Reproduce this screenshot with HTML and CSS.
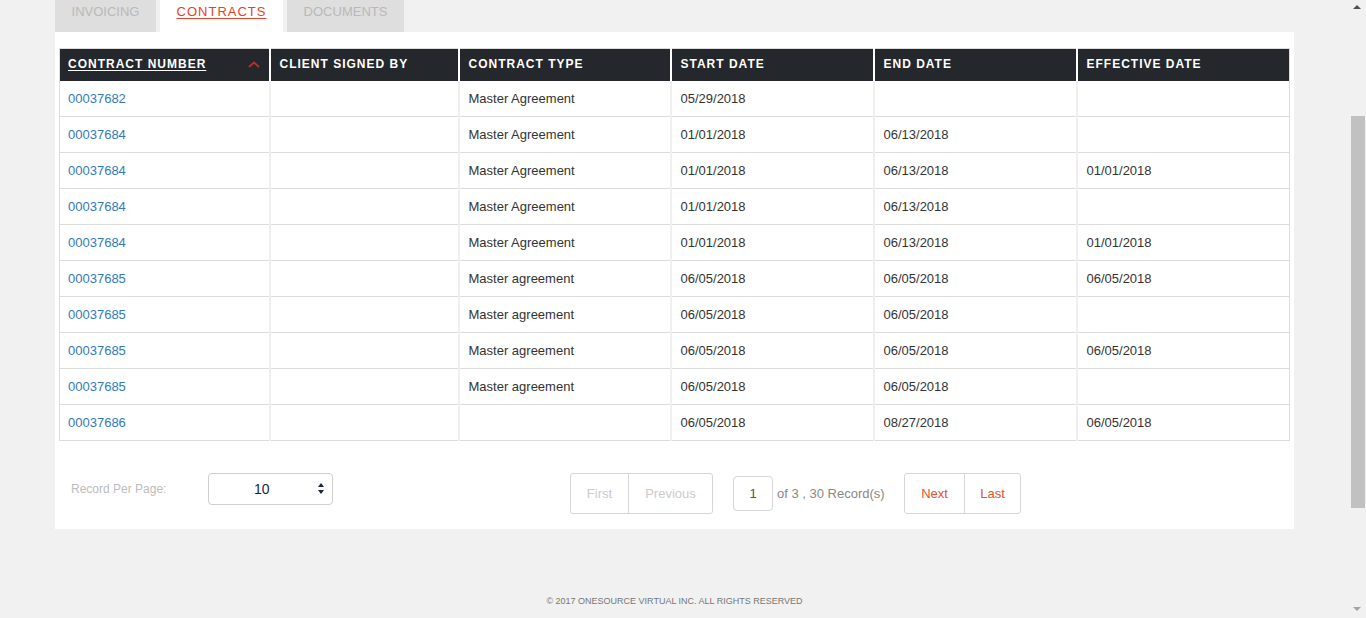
FILE: index.html
```html
<!DOCTYPE html>
<html>
<head>
<meta charset="utf-8">
<title>Contracts</title>
<link rel="stylesheet" href="styles.css">
</head>
<body>
<div class="page">
  <div class="wrap">
    <div class="tabs">
      <div class="tab tab-invoicing">INVOICING</div>
      <div class="tab tab-active">CONTRACTS</div>
      <div class="tab tab-documents">DOCUMENTS</div>
    </div>
    <div class="card">
      <table class="grid">
        <colgroup>
          <col class="c1"><col class="c2"><col class="c3"><col class="c4"><col class="c5"><col class="c6">
        </colgroup>
        <thead>
          <tr>
            <th class="sorted"><span class="sort-label">CONTRACT NUMBER</span>
              <svg class="chev" width="12" height="7" viewBox="0 0 12 7"><path d="M1 6 L6 1.5 L11 6" fill="none" stroke="#b8302b" stroke-width="1.8"/></svg>
            </th>
            <th>CLIENT SIGNED BY</th>
            <th>CONTRACT TYPE</th>
            <th>START DATE</th>
            <th>END DATE</th>
            <th>EFFECTIVE DATE</th>
          </tr>
        </thead>
        <tbody>
          <tr><td><a class="link">00037682</a></td><td></td><td>Master Agreement</td><td>05/29/2018</td><td></td><td></td></tr>
          <tr><td><a class="link">00037684</a></td><td></td><td>Master Agreement</td><td>01/01/2018</td><td>06/13/2018</td><td></td></tr>
          <tr><td><a class="link">00037684</a></td><td></td><td>Master Agreement</td><td>01/01/2018</td><td>06/13/2018</td><td>01/01/2018</td></tr>
          <tr><td><a class="link">00037684</a></td><td></td><td>Master Agreement</td><td>01/01/2018</td><td>06/13/2018</td><td></td></tr>
          <tr><td><a class="link">00037684</a></td><td></td><td>Master Agreement</td><td>01/01/2018</td><td>06/13/2018</td><td>01/01/2018</td></tr>
          <tr><td><a class="link">00037685</a></td><td></td><td>Master agreement</td><td>06/05/2018</td><td>06/05/2018</td><td>06/05/2018</td></tr>
          <tr><td><a class="link">00037685</a></td><td></td><td>Master agreement</td><td>06/05/2018</td><td>06/05/2018</td><td></td></tr>
          <tr><td><a class="link">00037685</a></td><td></td><td>Master agreement</td><td>06/05/2018</td><td>06/05/2018</td><td>06/05/2018</td></tr>
          <tr><td><a class="link">00037685</a></td><td></td><td>Master agreement</td><td>06/05/2018</td><td>06/05/2018</td><td></td></tr>
          <tr><td><a class="link">00037686</a></td><td></td><td></td><td>06/05/2018</td><td>08/27/2018</td><td>06/05/2018</td></tr>
        </tbody>
      </table>
      <div class="pager-row">
        <div class="rpp-label">Record Per Page:</div>
        <div class="rpp-select">
          <span class="rpp-value">10</span>
          <span class="spin"><span class="up"></span><span class="down"></span></span>
        </div>
        <div class="btn-group">
          <div class="pbtn pbtn-first disabled">First</div>
          <div class="pbtn pbtn-prev disabled">Previous</div>
        </div>
        <div class="page-input">1</div>
        <div class="page-info">of 3 , 30 Record(s)</div>
        <div class="btn-group">
          <div class="pbtn pbtn-next active">Next</div>
          <div class="pbtn pbtn-last active">Last</div>
        </div>
      </div>
    </div>
    <div class="footer">© 2017 ONESOURCE VIRTUAL INC. ALL RIGHTS RESERVED</div>
  </div>
</div>
<div class="scrollbar">
  <div class="sb-up"></div>
  <div class="sb-track"><div class="sb-thumb"></div></div>
  <div class="sb-down"></div>
</div>
</body>
</html>
```
FILE: styles.css
```css
html, body {
  margin: 0;
  padding: 0;
  background: #f1f1f1;
  font-family: "Liberation Sans", Arial, sans-serif;
  overflow: hidden;
}
.page {
  margin-right: 17px;
}
.wrap {
  margin: 0 55px;
}
.tabs {
  display: flex;
  gap: 4px;
  height: 32px;
}
.tab {
  box-sizing: border-box;
  height: 32px;
  padding-top: 3px;
  line-height: 17px;
  font-size: 13px;
  color: #b9b9b9;
  background: #dedede;
  text-align: center;
}
.tab-invoicing { width: 101px; }
.tab-documents { width: 117px; }
.tab-active {
  width: 123px;
  background: #fff;
  color: #e8402a;
  letter-spacing: 1px;
  text-decoration: underline;
  text-underline-offset: 2px;
}
.card {
  background: #fff;
  padding: 16px 4px 16px;
}
.grid {
  width: 100%;
  border-collapse: collapse;
  table-layout: fixed;
  border: 1px solid #dcdcdc;
}
.c1 { width: 210px; }
.c2 { width: 189px; }
.c3 { width: 212px; }
.c4 { width: 203px; }
.c5 { width: 203px; }
.c6 { width: auto; }
.grid th {
  background: #24282c;
  color: #fff;
  font-size: 12px;
  font-weight: bold;
  letter-spacing: 1px;
  text-align: left;
  height: 30px;
  padding: 0 8px 2px 9px;
  border-right: 2px solid #fff;
  border-top: 1px solid #dcdcdc;
  position: relative;
}
.grid th:first-child { padding-left: 8px; }
.grid th:last-child { border-right: 0; }
.sort-label { text-decoration: underline; text-underline-offset: 2px; }
.chev {
  position: absolute;
  right: 9px;
  top: 12px;
}
.grid td {
  height: 35px;
  padding: 0 8px 0 9px;
  font-size: 13px;
  color: #333;
  border-bottom: 1px solid #dcdcdc;
  border-right: 2px solid #efefef;
}
.grid td:first-child { padding-left: 8px; }
.grid td:last-child { border-right: 0; }
.link {
  color: #337ab7;
}
.pager-row {
  display: flex;
  align-items: center;
  margin-top: 32px;
  height: 40px;
}
.rpp-label {
  font-size: 12px;
  color: #bcbcbc;
  margin-left: 12px;
  width: 137px;
  margin-top: -9px;
}
.rpp-select {
  box-sizing: border-box;
  width: 125px;
  height: 32px;
  border: 1px solid #cfcfcf;
  border-radius: 4px;
  position: relative;
  margin-top: -8px;
  display: flex;
  align-items: center;
}
.rpp-value {
  font-size: 14px;
  color: #1a2442;
  margin-left: 45px;
}
.spin {
  position: absolute;
  right: 8px;
  top: 9px;
  display: flex;
  flex-direction: column;
  gap: 3px;
}
.spin .up {
  width: 0; height: 0;
  border-left: 3px solid transparent;
  border-right: 3px solid transparent;
  border-bottom: 4px solid #1a2442;
}
.spin .down {
  width: 0; height: 0;
  border-left: 3px solid transparent;
  border-right: 3px solid transparent;
  border-top: 4px solid #1a2442;
}
.btn-group {
  display: flex;
  box-sizing: border-box;
  height: 41px;
  border: 1px solid #d6d6d6;
  border-radius: 3px;
}
.rpp-select + .btn-group { margin-left: 237px; }
.pbtn {
  box-sizing: border-box;
  display: flex;
  align-items: center;
  justify-content: center;
  font-size: 13px;
  height: 39px;
}
.pbtn + .pbtn { border-left: 1px solid #d6d6d6; }
.pbtn-first { width: 57px; }
.pbtn-prev { width: 84px; }
.pbtn-next { width: 59px; }
.pbtn-last { width: 56px; }
.disabled { color: #cccccc; }
.active { color: #e0532d; }
.page-input {
  box-sizing: border-box;
  width: 40px;
  height: 35px;
  border: 1px solid #d6d6d6;
  border-radius: 4px;
  margin-left: 20px;
  display: flex;
  align-items: center;
  justify-content: center;
  font-size: 13px;
  color: #555;
}
.page-info {
  font-size: 13px;
  color: #888;
  margin-left: 4px;
  width: 127px;
}
.footer {
  text-align: center;
  font-size: 9px;
  color: #777;
  margin-top: 67px;
}
.scrollbar {
  position: fixed;
  right: 0;
  top: 0;
  width: 17px;
  height: 100%;
  background: #f1f1f1;
  display: flex;
  flex-direction: column;
}
.sb-up {
  height: 17px;
  position: relative;
}
.sb-up::after {
  content: "";
  position: absolute;
  left: 4px;
  top: 5px;
  border-left: 4px solid transparent;
  border-right: 4px solid transparent;
  border-bottom: 4px solid #505050;
}
.sb-track {
  flex: 1;
  position: relative;
}
.sb-thumb {
  position: absolute;
  left: 2px;
  right: 1px;
  top: 99px;
  height: 392px;
  background: #c1c1c1;
}
.sb-down {
  height: 17px;
  position: relative;
}
.sb-down::after {
  content: "";
  position: absolute;
  left: 4px;
  top: 6px;
  border-left: 4px solid transparent;
  border-right: 4px solid transparent;
  border-top: 4px solid #a3a3a3;
}
```
